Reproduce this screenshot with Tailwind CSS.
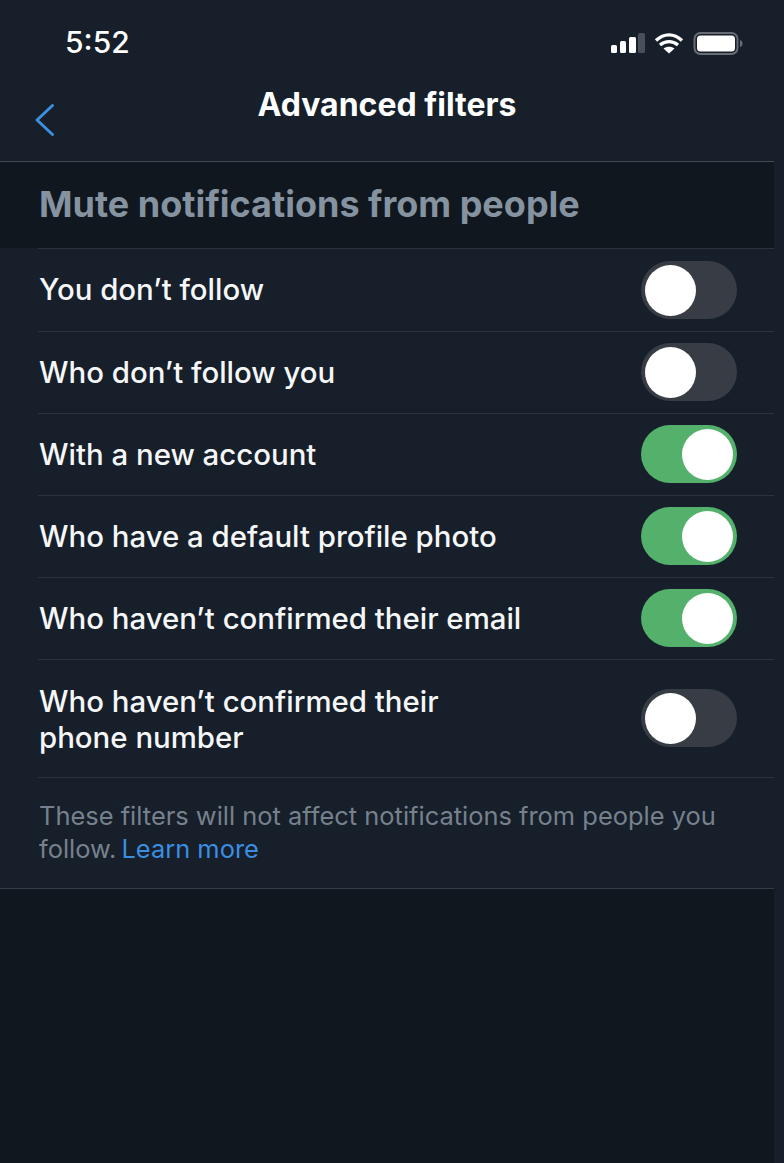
<!DOCTYPE html>
<html><head><meta charset="utf-8"><script src="https://cdn.jsdelivr.net/npm/@tailwindcss/browser@4"></script></head>
<body class="m-0">
<div class="w-[784px] h-[1163px] overflow-hidden flex flex-col bg-[#161f2a] text-white font-['Inter','Liberation_Sans',sans-serif]">
  <header class="relative h-[162px] shrink-0 border-b border-[#434a54] w-[774px]">
    <div class="pl-[65px] pt-[25px]">
      <span class="block text-[30px] leading-[35px] font-medium">5:52</span>
    </div>
    <svg class="absolute left-[610px] top-[31px]" width="134" height="24" viewBox="0 0 134 24">
      <rect x="1" y="14" width="6" height="8" rx="1.5" fill="#fff"/><rect x="10" y="10" width="6" height="12" rx="1.5" fill="#fff"/><rect x="19" y="6" width="7" height="16" rx="1.5" fill="#fff"/><rect x="28" y="2" width="7" height="20" rx="1.5" fill="#4a5059"/>
      <path d="M46 9.5C54 2 64 2 72 9.5M50 14C55.500 9.500 62.500 9.500 68 14" fill="none" stroke="#fff" stroke-width="3.400"/><path d="M53.500 17.500C56.500 15 61.500 15 64.500 17.500L59 22.500Z" fill="#fff"/>
      <rect x="84.500" y="2" width="43" height="21" rx="6" fill="none" stroke="#686d75" stroke-width="2"/><rect x="87" y="4.500" width="38" height="16" rx="3.500" fill="#fff"/><path d="M130 9v7c1.800-.5 2.500-2 2.500-3.500S131.800 9.500 130 9Z" fill="#686d75"/>
    </svg>
    <svg class="absolute left-[33px] top-[102px]" width="24" height="36" viewBox="0 0 24 36"><path d="M19.500 3.500 4 18l15.500 14.500" fill="none" stroke="#3b8ee0" stroke-width="3" stroke-linecap="round" stroke-linejoin="round"/></svg>
    <h1 class="absolute left-0 w-[774px] top-[86px] text-center text-[32px] leading-[38px] font-bold">Advanced filters</h1>
  </header>
  <section class="h-[86px] shrink-0 w-[774px] bg-[#10171e] flex items-center pl-[39px] pb-[2px]">
    <h2 class="text-[36px] leading-[40px] font-bold text-[#8592a0]">Mute notifications from people</h2>
  </section>
  <main class="w-[774px] shrink-0 text-[29.4px] font-medium text-[#f5f6f7]">
    <div class="ml-[38px] border-t border-[#2c333d] h-[83px] flex items-center justify-between pl-px pr-[37px]">
      <span>You don’t follow</span>
      <div class="w-[96px] h-[58px] rounded-full bg-[#383d45] p-[4px] flex justify-start"><div class="size-[51px] rounded-full bg-white"></div></div>
    </div>
    <div class="ml-[38px] border-t border-[#2c333d] h-[82px] pb-[2px] flex items-center justify-between pl-px pr-[37px]">
      <span class="mt-[4px]">Who don’t follow you</span>
      <div class="w-[96px] h-[58px] rounded-full bg-[#383d45] p-[4px] flex justify-start"><div class="size-[51px] rounded-full bg-white"></div></div>
    </div>
    <div class="ml-[38px] border-t border-[#2c333d] h-[82px] pb-[2px] flex items-center justify-between pl-px pr-[37px]">
      <span class="mt-[4px]">With a new account</span>
      <div class="w-[96px] h-[58px] rounded-full bg-[#54b16c] p-[4px] flex justify-end"><div class="size-[51px] rounded-full bg-white"></div></div>
    </div>
    <div class="ml-[38px] border-t border-[#2c333d] h-[82px] pb-[2px] flex items-center justify-between pl-px pr-[37px]">
      <span class="mt-[4px]">Who have a default profile photo</span>
      <div class="w-[96px] h-[58px] rounded-full bg-[#54b16c] p-[4px] flex justify-end"><div class="size-[51px] rounded-full bg-white"></div></div>
    </div>
    <div class="ml-[38px] border-t border-[#2c333d] h-[82px] pb-[2px] flex items-center justify-between pl-px pr-[37px]">
      <span class="mt-[4px]">Who haven’t confirmed their email</span>
      <div class="w-[96px] h-[58px] rounded-full bg-[#54b16c] p-[4px] flex justify-end"><div class="size-[51px] rounded-full bg-white"></div></div>
    </div>
    <div class="ml-[38px] border-t border-[#2c333d] h-[118px] flex items-center justify-between pl-px pr-[37px]">
      <span class="leading-[36px] mt-[2px]">Who haven’t confirmed their<br>phone number</span>
      <div class="w-[96px] h-[58px] rounded-full bg-[#383d45] p-[4px] flex justify-start mb-[1px]"><div class="size-[51px] rounded-full bg-white"></div></div>
    </div>
  </main>
  <div class="ml-[38px] w-[736px] border-t border-[#2c333d] shrink-0"></div>
  <p class="w-[774px] shrink-0 h-[111px] border-b border-[#363c46] pl-[39px] pt-[21px] text-[25.45px] leading-[33px] text-[#77818d]">These filters will not affect notifications from people you<br>follow. <span class="text-[#3b8ee0] -ml-[2px]">Learn more</span></p>
  <div class="w-[774px] grow bg-[#10171e]"></div>
</div>
</body></html>
